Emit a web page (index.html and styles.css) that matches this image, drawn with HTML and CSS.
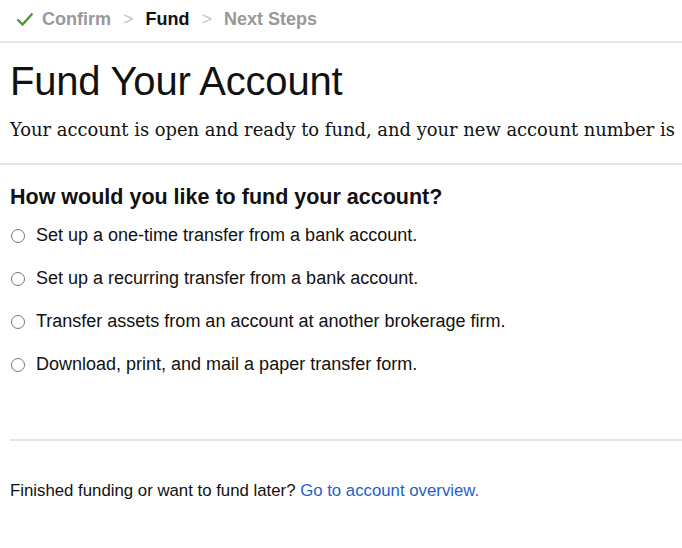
FILE: index.html
```html
<!DOCTYPE html>
<html lang="en">
  <head>
    <meta charset="UTF-8" />
    <title>Fund Your Account</title>
    <link rel="stylesheet" href="styles.css">
  </head>
  <body>
    <!-- Step tracker -->
    <nav class="steps">
      <span class="step done">
        <svg class="check" width="18" height="14" viewBox="0 0 18 14">
          <path d="M1.5 7.5 L6.5 12.5 L16.5 1.5" fill="none" stroke="#4c9a2a" stroke-width="2.4" />
        </svg>
        Confirm
      </span>
      <span class="sep">&gt;</span>
      <span class="step current">Fund</span>
      <span class="sep">&gt;</span>
      <span class="step">Next Steps</span>
    </nav>

    <header class="intro">
      <h1>Fund Your Account</h1>
      <p class="lead">Your account is open and ready to fund, and your new account number is</p>
    </header>

    <main class="content">
      <section class="options">
        <h2>How would you like to fund your account?</h2>
        <label class="option"><input type="radio" name="fund" /> Set up a one-time transfer from a bank account.</label>
        <label class="option"><input type="radio" name="fund" /> Set up a recurring transfer from a bank account.</label>
        <label class="option"><input type="radio" name="fund" /> Transfer assets from an account at another brokerage firm.</label>
        <label class="option"><input type="radio" name="fund" /> Download, print, and mail a paper transfer form.</label>
      </section>
      <p class="later">Finished funding or want to fund later? <a href="#">Go to account overview.</a></p>
    </main>
  </body>
</html>
```

FILE: styles.css
```css
* {
  margin: 0;
  padding: 0;
  box-sizing: border-box;
}

body {
  font-family: "Liberation Sans", Arial, sans-serif;
  color: #111;
  background: #fff;
  overflow: hidden;
}

.steps {
  height: 43px;
  padding: 0 0 3px 16px;
  display: flex;
  align-items: center;
  gap: 12px;
  border-bottom: 2px solid #e6e6e6;
  font-size: 18px;
  font-weight: 700;
  color: #999;
}

.step {
  display: flex;
  align-items: center;
  gap: 8px;
}

.step.current {
  color: #111;
}

.sep {
  font-weight: 400;
  color: #c4c4c4;
}

.intro {
  height: 122px;
  padding: 16px 0 0 10px;
  border-bottom: 2px solid #e6e6e6;
}

h1 {
  font-size: 40px;
  font-weight: 400;
  line-height: 44px;
  letter-spacing: -0.2px;
}

.lead {
  margin-top: 16px;
  font-family: "DejaVu Serif", serif;
  font-size: 17.9px;
  white-space: nowrap;
}

.content {
  padding: 0 0 0 10px;
}

.options {
  padding: 20px 0 0;
  height: 276px;
  border-bottom: 2px solid #e6e6e6;
}

h2 {
  font-size: 21.5px;
  font-weight: 700;
  margin-bottom: 4px;
}

.option {
  display: flex;
  align-items: center;
  height: 43px;
  font-size: 18px;
  gap: 11px;
}

.option input {
  width: 14px;
  height: 14px;
  margin-left: 1px;
}

.later {
  margin-top: 40px;
  font-size: 16.8px;
}

.later a {
  color: #1d5fc9;
  text-decoration: none;
}
```
